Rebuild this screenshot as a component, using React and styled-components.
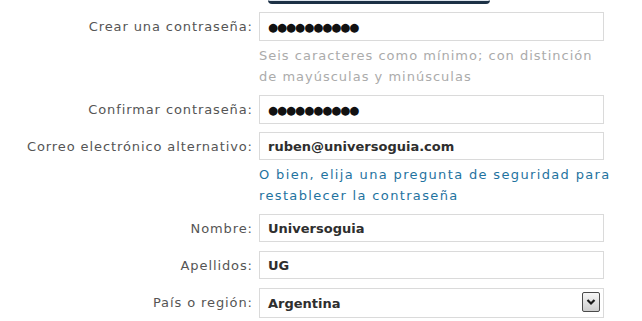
import React from 'react'
import { styled, createGlobalStyle } from 'styled-components'

const GlobalStyle = createGlobalStyle`
  html, body {
    margin: 0;
    padding: 0;
    background: #ffffff;
  }
  body {
    font-family: "DejaVu Sans", Verdana, sans-serif;
  }
`

export default function App() {
  return (
    <>
      <GlobalStyle />
      <StyledForm>
        <div />
        <StyledFieldCell>
          <StyledTopEdge />
        </StyledFieldCell>

        <StyledLabel>Crear una contraseña:</StyledLabel>
        <StyledFieldCell>
          <StyledInput $dots $h={29}>●●●●●●●●●●</StyledInput>
          <StyledHint>Seis caracteres como mínimo; con distinción<br />de mayúsculas y minúsculas</StyledHint>
        </StyledFieldCell>

        <StyledLabel>Confirmar contraseña:</StyledLabel>
        <StyledFieldCell>
          <StyledInput $dots $h={29}>●●●●●●●●●●</StyledInput>
        </StyledFieldCell>

        <StyledLabel>Correo electrónico alternativo:</StyledLabel>
        <StyledFieldCell>
          <StyledInput>ruben@universoguia.com</StyledInput>
          <StyledLink>O bien, elija una pregunta de seguridad para<br />restablecer la contraseña</StyledLink>
        </StyledFieldCell>

        <StyledLabel>Nombre:</StyledLabel>
        <StyledFieldCell>
          <StyledInput>Universoguia</StyledInput>
        </StyledFieldCell>

        <StyledLabel>Apellidos:</StyledLabel>
        <StyledFieldCell>
          <StyledInput>UG</StyledInput>
        </StyledFieldCell>

        <StyledLabel>País o región:</StyledLabel>
        <StyledFieldCell>
          <StyledInput $h={30}>
            Argentina
            <StyledDropButton>
              <svg width="10" height="8" viewBox="0 0 10 8">
                <path d="M1.5 2 L5 5.5 L8.5 2" fill="none" stroke="#1a1a1a" strokeWidth="2.2" />
              </svg>
            </StyledDropButton>
          </StyledInput>
        </StyledFieldCell>
      </StyledForm>
    </>
  )
}

const StyledForm = styled.div`
display: grid;
grid-template-columns: 252px 345px;
column-gap: 7px;
row-gap: 8px;
align-items: start;
`

const StyledLabel = styled.div`
text-align: right;
font-size: 13px;
letter-spacing: 0.9px;
margin-right: -0.9px;
color: #555555;
line-height: 29px;
white-space: nowrap;
`

const StyledFieldCell = styled.div`
display: flex;
flex-direction: column;
`

const StyledTopEdge = styled.div`
margin-left: 9px;
width: 222px;
height: 1px;
border-bottom: 3px solid #1d3146;
border-radius: 0 0 12px 12px;
background: #dfe6ee;
`

const StyledInput = styled.div`
position: relative;
box-sizing: border-box;
height: ${p => p.$h || 28}px;
border: 1px solid #dadada;
background: #ffffff;
padding: 0 8px;
display: flex;
align-items: center;
font-size: ${p => (p.$dots ? '11.5px' : '13px')};
letter-spacing: ${p => (p.$dots ? '-1px' : '0')};
font-weight: bold;
color: ${p => (p.$dots ? '#111111' : '#2e2e2e')};
`

const StyledDropButton = styled.div`
position: absolute;
right: 3px;
top: 3px;
width: 18px;
height: 20px;
box-sizing: border-box;
border: 1px solid #4a4a4a;
border-radius: 2px;
background: linear-gradient(#f6f6f6, #cdcdcd);
display: flex;
align-items: center;
justify-content: center;
`

const StyledHint = styled.div`
margin-top: 4px;
font-size: 13px;
letter-spacing: 1px;
line-height: 21px;
color: #ababab;
white-space: nowrap;
`

const StyledLink = styled.div`
margin-top: 4px;
font-size: 13px;
letter-spacing: 1.35px;
line-height: 21px;
color: #1f73a0;
white-space: nowrap;
`
